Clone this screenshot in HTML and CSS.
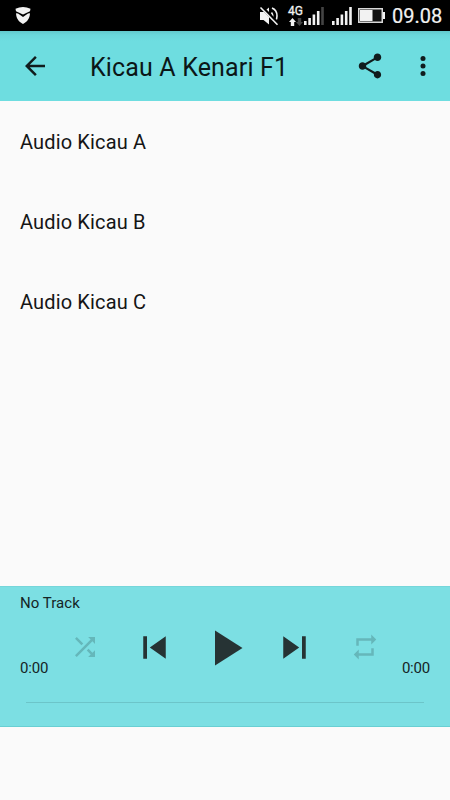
FILE: index.html
```html
<!DOCTYPE html>
<html lang="id">
<head>
<meta charset="utf-8">
<title>Kicau A Kenari F1</title>
<link rel="stylesheet" href="styles.css">
</head>
<body>
<div class="status">
  <svg class="shield" width="16" height="18" viewBox="0 0 16 18"><path d="M.5 1.800Q8-1.600 15.500 1.800L15 4.200 8 7.600 1 4.200zM1 6.300 3 6.400 8 10l5-3.600 2-.1C14.800 11 12.500 15 8 17 3.500 15 1.200 11 1 6.300z"/></svg>
  <svg class="mute" width="20" height="20" viewBox="0 0 20 20"><path d="M1 6h3.500l5.500-4.500v17L4.500 14H1z"/><path class="line" d="M12.500 6.500q2.500 3.500 0 7M13 2q5 2 5 8 0 3-1.500 5"/><path class="gap" d="M2.500 1l17 17"/><path class="line" d="M1.500 1.500 18.500 18.800"/></svg>
  <div class="network">
    <span class="net-label">4G</span>
    <svg width="14" height="8" viewBox="0 0 14 8"><path d="M3.500 0 7 4H5.200v4H1.800V4H0z"/><path class="dim" d="M10.500 8 14 4h-1.800V0H8.800v4H7z"/></svg>
  </div>
  <svg class="signal-a" width="20" height="18" viewBox="0 0 20 18"><path d="M0 14h2.600v4H0zM4.300 11h2.600v7H4.300zM8.600 7.500h2.600V18H8.600zM12.900 4h2.600v14h-2.600z"/><path class="dim" d="M17.200 0h2.600v18h-2.600z"/></svg>
  <svg class="signal-b" width="20" height="18" viewBox="0 0 20 18"><path d="M0 14h2.600v4H0zM4.300 11h2.600v7H4.300zM8.600 7.500h2.600V18H8.600zM12.900 4h2.600v14h-2.600zM17.200 0h2.600v18h-2.600z"/></svg>
  <svg class="battery" width="27" height="15" viewBox="0 0 27 15"><rect class="case" x=".75" y=".75" width="23.500" height="13.500"/><path d="M2 2h12.500v11H2zM25 4h2v7h-2z"/></svg>
  <span class="clock">09.08</span>
</div>
<header class="appbar">
  <svg class="back" width="30" height="30" viewBox="0 0 24 24"><path d="M20 11H7.830l5.590-5.590L12 4l-8 8 8 8 1.410-1.410L7.830 13H20v-2z"/></svg>
  <h1>Kicau A Kenari F1</h1>
  <svg class="share" width="30" height="30" viewBox="0 0 24 24"><path d="M18 16.080c-.76 0-1.440.3-1.960.77L8.910 12.700c.05-.23.09-.46.09-.7s-.04-.47-.09-.7l7.050-4.110c.54.5 1.250.81 2.040.81 1.660 0 3-1.340 3-3s-1.340-3-3-3-3 1.340-3 3c0 .24.04.47.09.7L8.040 9.810C7.500 9.310 6.790 9 6 9c-1.660 0-3 1.340-3 3s1.340 3 3 3c.79 0 1.500-.31 2.040-.81l7.120 4.160c-.05.21-.08.43-.08.65 0 1.610 1.310 2.920 2.920 2.920s2.920-1.310 2.920-2.920-1.310-2.920-2.920-2.920z"/></svg>
  <svg class="more" width="30" height="30" viewBox="0 0 24 24"><circle cx="12" cy="6" r="2"/><circle cx="12" cy="12" r="2"/><circle cx="12" cy="18" r="2"/></svg>
</header>
<main class="tracks">
  <div class="track">Audio Kicau A</div>
  <div class="track">Audio Kicau B</div>
  <div class="track">Audio Kicau C</div>
</main>
<section class="player">
  <div class="now">No Track</div>
  <div class="panel">
    <span class="time">0:00</span>
    <div class="controls">
      <svg class="off" width="30" height="30" viewBox="0 0 24 24"><path d="M10.590 9.170 5.410 4 4 5.410l5.170 5.170 1.420-1.410zM14.500 4l2.040 2.040L4 18.590 5.410 20 17.960 7.460 20 9.500V4h-5.500zm.33 9.410-1.410 1.410 3.130 3.130L14.500 20H20v-5.500l-2.040 2.040-3.130-3.130z"/></svg>
      <svg class="skip" width="45" height="45" viewBox="0 0 24 24"><path d="M6 6h2v12H6zm3.500 6 8.500 6V6z"/></svg>
      <svg class="play" width="60" height="60" viewBox="0 0 24 24"><path d="M8 5v14l11-7z"/></svg>
      <svg class="skip" width="45" height="45" viewBox="0 0 24 24"><path d="M6 18l8.500-6L6 6v12zM16 6v12h2V6h-2z"/></svg>
      <svg class="off" width="30" height="30" viewBox="0 0 24 24"><path d="M7 7h10v3l4-4-4-4v3H5v6h2V7zm10 10H7v-3l-4 4 4 4v-3h12v-6h-2v4z"/></svg>
    </div>
    <span class="time end">0:00</span>
  </div>
  <div class="seek"></div>
</section>
</body>
</html>
```

FILE: styles.css
```css
* { box-sizing: border-box; }
body {
  margin: 0;
  height: 800px;
  display: flex;
  flex-direction: column;
  overflow: hidden;
  background: #fafafa;
  color: #151515;
  font-family: Roboto, sans-serif;
}
svg { display: block; flex: none; }

.status {
  height: 31px;
  flex: none;
  display: flex;
  align-items: flex-start;
  background: #000;
  color: #f2f2f2;
  fill: #f2f2f2;
}
.shield { margin: 7px 0 0 15px; }
.mute { margin: 6px 0 0 228px; }
.line { fill: none; stroke: #f2f2f2; stroke-width: 1.6; }
.gap { fill: none; stroke: #000; stroke-width: 3.5; }
.dim { fill: #444; }
.network { width: 16px; margin: 6px 0 0 9px; }
.network svg { margin: 1px 0 0 1px; }
.net-label { display: block; font-size: 12px; line-height: 11px; height: 11px; letter-spacing: -.1px; -webkit-text-stroke: .3px #f2f2f2; }
.signal-a { margin: 7px 0 0 0; }
.signal-b { margin: 7px 0 0 8px; }
.battery { margin: 8px 0 0 6px; }
.case { fill: #111; stroke: #d8d8d8; stroke-width: 1.5; }
.clock { margin-left: 7px; font-size: 20px; line-height: 32px; -webkit-text-stroke: .2px #f2f2f2; }

.appbar {
  height: 70px;
  flex: none;
  display: flex;
  align-items: center;
  padding: 0 12.500px 0 20px;
  background: linear-gradient(#62c9cc, #6ad8db 4px, #6edde0 10px);
  fill: #101c1d;
}
h1 {
  margin: 3px 0 0 40px;
  flex: 1;
  font-size: 25px;
  line-height: 30px;
  font-weight: 400;
  letter-spacing: .15px;
  color: #0b1617;
  white-space: nowrap;
}
.more { margin-left: 22.500px; }

.tracks { height: 485px; flex: none; }
.track {
  height: 80px;
  padding-left: 20px;
  font-size: 20px;
  line-height: 83px;
  letter-spacing: .15px;
}

.player {
  height: 141px;
  flex: none;
  background: #7cdfe3;
  border-top: 1px solid #75d6da;
  border-bottom: 1px solid #68cfd3;
  color: #152526;
}
.now { height: 30px; padding-left: 20px; font-size: 15px; line-height: 32px; letter-spacing: .05px; }
.panel {
  height: 61px;
  display: flex;
  justify-content: space-between;
  align-items: flex-end;
  padding: 0 20px;
}
.time { width: 30px; padding-bottom: 1px; font-size: 15px; line-height: 18px; letter-spacing: -.2px; white-space: nowrap; }
.end { text-align: right; }
.controls {
  display: grid;
  grid-template-columns: repeat(5, 70px);
  height: 61px;
  place-items: center;
  fill: #263334;
}
.skip { margin-right: 1px; }
.off { fill: #65b7ba; margin-bottom: 1px; }
.seek { height: 1px; margin: 24px 26px 0; background: #6cc5c9; }
```
